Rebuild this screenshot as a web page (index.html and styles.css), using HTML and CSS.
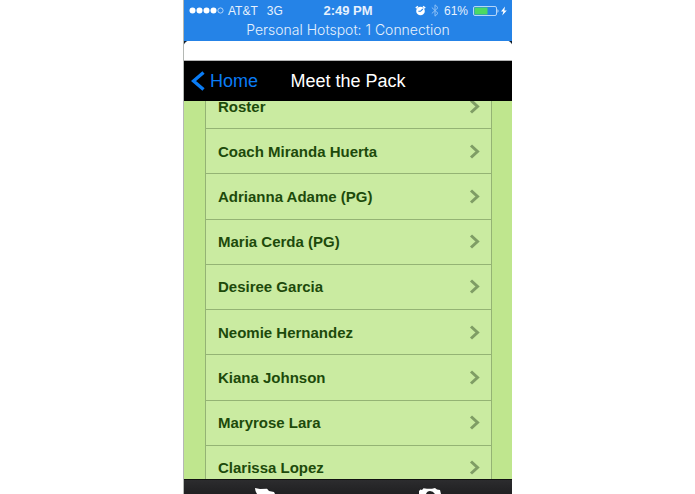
FILE: index.html
```html
<!DOCTYPE html>
<html lang="en">
<head>
<meta charset="utf-8">
<meta name="viewport" content="width=device-width, initial-scale=1">
<title>Meet the Pack</title>
<link rel="stylesheet" href="styles.css">
</head>
<body>
<div class="phone">
  <div class="status">
    <div class="status-row">
      <div class="carrier">
        <svg class="signal" viewBox="0 0 35 7" aria-hidden="true"><circle cx="3.5" cy="3.5" r="3"/><circle cx="10.5" cy="3.5" r="3"/><circle cx="17.5" cy="3.5" r="3"/><circle cx="24.5" cy="3.5" r="3"/><circle class="empty" cx="31.5" cy="3.5" r="2.6"/></svg>
        <span>AT&amp;T</span>
        <span class="network">3G</span>
      </div>
      <span class="clock">2:49 PM</span>
      <div class="indicators">
        <svg class="alarm" viewBox="0 0 11 12" aria-hidden="true"><circle cx="5.5" cy="6" r="4.3" fill="#fff"/><path d="M.8 3.2 3 1.4M10.2 3.2 8 1.4" stroke="#fff" stroke-width="1.5"/><path d="M7.8 4 5.5 6.3H3.4" fill="none" stroke="#2583e7" stroke-width="1.1"/></svg>
        <svg class="bluetooth" viewBox="0 0 8 13" aria-hidden="true"><path d="M.8 3.5 7 9.3 4 12.2V.8L7 3.7.8 9.5" fill="none" stroke="#8fc0f5"/></svg>
        <span>61%</span>
        <svg class="battery" viewBox="0 0 34 10" aria-hidden="true"><rect x=".5" y=".5" width="23" height="9" rx="1.5" fill="none" stroke="#b5d5f8"/><rect x="1.5" y="1.5" width="13" height="7" fill="#4bd964"/><path d="M24.5 3q2 2 0 4z" fill="#d5e7fb"/><path d="M32 .5 28 5.6h2.4L29.2 9.6l4.6-5.2h-2.5z" fill="#fff"/></svg>
      </div>
    </div>
    <p class="hotspot">Personal Hotspot: 1 Connection</p>
  </div>
  <div class="gap"></div>
  <header class="navbar">
    <a class="back" href="#home"><svg viewBox="0 0 14 20" aria-hidden="true"><path d="M12.5 1.5 2.5 10l10 8.5" fill="none" stroke="#0a7cf5" stroke-width="3.4"/></svg>Home</a>
    <h1>Meet the Pack</h1>
  </header>
  <main class="scroller">
    <ul class="roster">
      <li><a href="#roster">Roster<svg viewBox="0 0 11 15" aria-hidden="true"><path d="M2 1.5 8.5 7.5 2 13.5"/></svg></a></li>
      <li><a href="#huerta">Coach Miranda Huerta<svg viewBox="0 0 11 15" aria-hidden="true"><path d="M2 1.5 8.5 7.5 2 13.5"/></svg></a></li>
      <li><a href="#adame">Adrianna Adame (PG)<svg viewBox="0 0 11 15" aria-hidden="true"><path d="M2 1.5 8.5 7.5 2 13.5"/></svg></a></li>
      <li><a href="#cerda">Maria Cerda (PG)<svg viewBox="0 0 11 15" aria-hidden="true"><path d="M2 1.5 8.5 7.5 2 13.5"/></svg></a></li>
      <li><a href="#garcia">Desiree Garcia<svg viewBox="0 0 11 15" aria-hidden="true"><path d="M2 1.5 8.5 7.5 2 13.5"/></svg></a></li>
      <li><a href="#hernandez">Neomie Hernandez<svg viewBox="0 0 11 15" aria-hidden="true"><path d="M2 1.5 8.5 7.5 2 13.5"/></svg></a></li>
      <li><a href="#johnson">Kiana Johnson<svg viewBox="0 0 11 15" aria-hidden="true"><path d="M2 1.5 8.5 7.5 2 13.5"/></svg></a></li>
      <li><a href="#lara">Maryrose Lara<svg viewBox="0 0 11 15" aria-hidden="true"><path d="M2 1.5 8.5 7.5 2 13.5"/></svg></a></li>
      <li><a href="#lopez">Clarissa Lopez<svg viewBox="0 0 11 15" aria-hidden="true"><path d="M2 1.5 8.5 7.5 2 13.5"/></svg></a></li>
    </ul>
  </main>
  <nav class="tabs">
    <a href="#team" aria-label="Team"><svg viewBox="0 0 24 6" aria-hidden="true"><path d="M1 0 6 1 13 .8 15 3 20 4 21 6H3L1.5 3z" fill="#fff"/></svg></a>
    <a href="#photos" aria-label="Photos"><svg viewBox="0 0 24 6" aria-hidden="true"><path d="M1 6V3L2.5 1.5 4 2 5.5.3 9 .8H14L17 0 19 1.5 22 2 23 6H17Q15 3 12 3T8 6z" fill="#fff"/></svg></a>
  </nav>
</div>
</body>
</html>
```

FILE: styles.css
```css
* {
  box-sizing: border-box;
}

body {
  margin: 0;
  background: #fff;
  font-family: "Liberation Sans", Arial, sans-serif;
}

a {
  color: inherit;
  text-decoration: none;
}

svg {
  display: block;
  flex: none;
}

.phone {
  display: flex;
  flex-direction: column;
  max-width: 329px;
  height: 100vh;
  margin: 0 auto;
  overflow: hidden;
  border-left: 1px solid #b4b8b4;
}

.status {
  height: 41px;
  background: #2583e7;
  color: #e6f1fd;
}

.status-row {
  display: grid;
  grid-template-columns: 1fr auto 1fr;
  align-items: center;
  height: 21px;
  padding: 0 5px;
  font-size: 12px;
}

.carrier,
.indicators {
  display: flex;
  align-items: center;
}

.indicators {
  justify-content: flex-end;
  gap: 5px;
}

.signal {
  width: 35px;
  height: 7px;
  margin-right: 4px;
  fill: #fff;
}

.signal .empty {
  fill: none;
  stroke: #d5e7fb;
  stroke-width: 0.8;
}

.network {
  margin-left: 9px;
}

.clock {
  font-size: 13px;
  font-weight: bold;
}

.alarm {
  width: 11px;
  height: 12px;
}

.bluetooth {
  width: 8px;
  height: 13px;
}

.battery {
  width: 34px;
  height: 10px;
}

.hotspot {
  margin: 0;
  font-family: Inter, "Liberation Sans", sans-serif;
  font-size: 14px;
  font-weight: 300;
  line-height: 18px;
  text-align: center;
}

.gap {
  height: 19px;
  background: radial-gradient(circle at 6px 6px, #fff 6px, #12202e 7px) 0 0 / 6px 6px no-repeat,
    radial-gradient(circle at 0 6px, #fff 6px, #12202e 7px) 100% 0 / 6px 6px no-repeat,
    #fff;
}

.navbar {
  display: grid;
  grid-template-columns: 1fr auto 1fr;
  align-items: center;
  height: 41px;
  padding: 0 7px;
  border-top: 1px solid #b4b4b4;
  background: #000;
  color: #fff;
  font-size: 18px;
}

.back {
  display: flex;
  align-items: center;
  gap: 5px;
  color: #0a7cf5;
}

.back svg {
  width: 14px;
  height: 20px;
}

.navbar h1 {
  margin: 0;
  font-size: 18px;
  font-weight: normal;
}

.scroller {
  flex: 1;
  display: flex;
  min-height: 0;
  padding: 0 20px 0 21px;
  overflow: hidden;
  background: #bfe68e;
}

.roster {
  flex: 1;
  display: grid;
  grid-auto-rows: 1fr;
  margin: -18px 0 -13px;
  padding: 0;
  border: 1px solid #94b374;
  background: #caeba1;
  list-style: none;
}

.roster li {
  display: flex;
  border-bottom: 1px solid #94b374;
}

.roster a {
  flex: 1;
  display: flex;
  align-items: center;
  justify-content: space-between;
  padding: 0 11px 0 12px;
  color: #1d4a0b;
  font-size: 15px;
  font-weight: bold;
}

.roster svg {
  width: 11px;
  height: 15px;
  fill: none;
  stroke: #7f9d65;
  stroke-width: 3;
}

.tabs {
  display: grid;
  grid-template-columns: 1fr 1fr;
  align-items: end;
  justify-items: center;
  height: 15px;
  border-top: 1px solid #111;
  background: linear-gradient(#2c2c2e, #202022);
}

.tabs svg {
  width: 24px;
  height: 6px;
}
```
